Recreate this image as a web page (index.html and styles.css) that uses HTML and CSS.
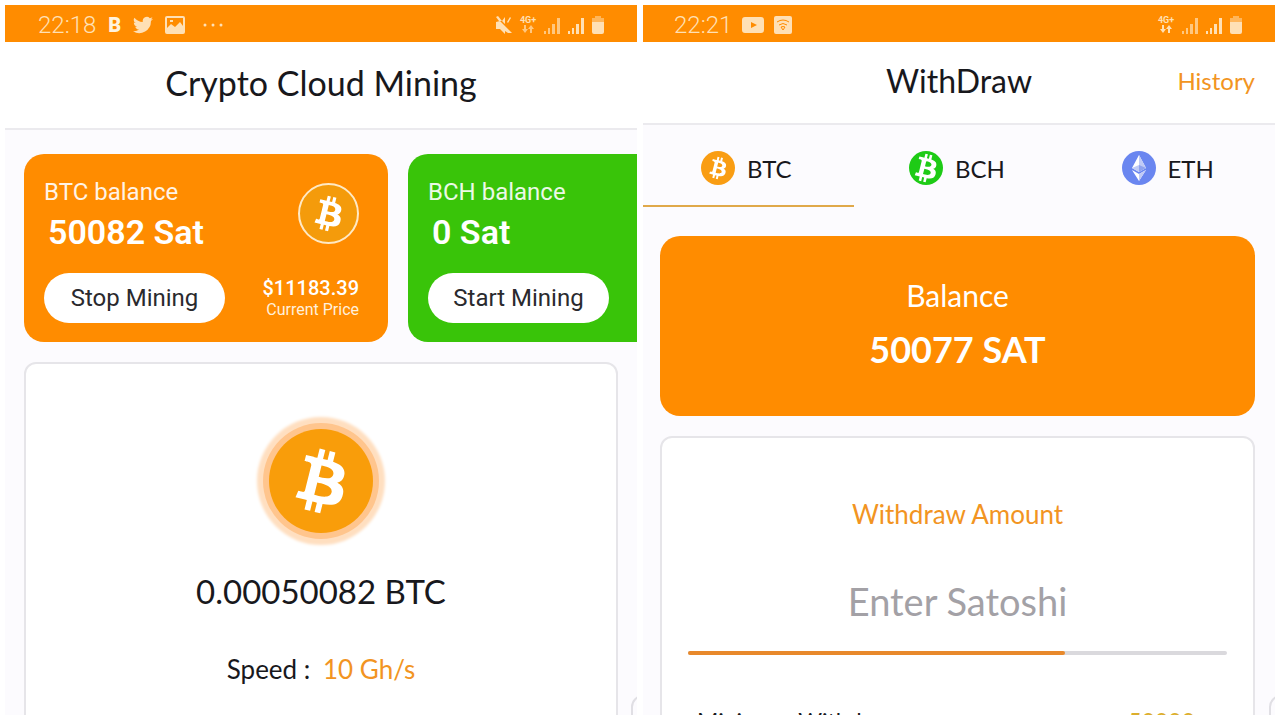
FILE: index.html
```html
<!DOCTYPE html>
<html lang="en">
<head>
    <meta charset="UTF-8">
    <meta name="viewport" content="width=device-width, initial-scale=1.0">
    <title>Crypto Cloud Mining</title>
    <link rel="stylesheet" href="styles.css">
</head>
<body>

    <svg class="sprite" aria-hidden="true">
        <symbol id="bitcoin" viewBox="0 0 32 32">
            <path fill="#fff" d="M23.189 14.02c.314-2.096-1.283-3.223-3.465-3.975l.708-2.84-1.728-.43-.69 2.765c-.454-.114-.92-.22-1.385-.326l.695-2.783L15.596 6l-.708 2.839c-.376-.086-.746-.17-1.104-.26l.002-.009-2.384-.595-.46 1.846s1.283.294 1.256.312c.7.175.826.638.805 1.006l-.806 3.235c.048.012.11.03.18.057l-.183-.045-1.13 4.532c-.086.212-.303.531-.793.41.018.025-1.256-.313-1.256-.313l-.858 1.978 2.25.561c.418.105.828.215 1.231.318l-.715 2.872 1.727.43.708-2.84c.472.127.93.245 1.378.357l-.706 2.828 1.728.43.715-2.866c2.948.558 5.164.333 6.097-2.333.752-2.146-.037-3.385-1.588-4.192 1.13-.26 1.98-1.003 2.207-2.538zm-3.95 5.538c-.533 2.147-4.148.986-5.32.695l.95-3.805c1.172.293 4.929.872 4.37 3.11zm.535-5.569c-.487 1.953-3.495.96-4.47.717l.86-3.45c.975.243 4.118.696 3.61 2.733z"/>
        </symbol>
        <symbol id="signal" viewBox="0 0 18 18">
            <path d="M1 15h2v3H1zM5 12h2v6H5zM9 8h3v10H9z"/>
            <path class="last-bar" d="M14 2h3v16h-3z"/>
        </symbol>
        <symbol id="battery" viewBox="0 0 14 18">
            <path opacity=".5" d="M4 0h6v2h3v5H1V2h3z"/>
            <path d="M1 6h12v10a2 2 0 0 1-2 2H3a2 2 0 0 1-2-2z"/>
        </symbol>
        <symbol id="arrows" viewBox="0 0 14 8">
            <path d="M3 0h2v4h2L4 8 1 4h2zM9 8h2V4h2l-3-4-3 4h2z"/>
        </symbol>
    </svg>

    <!-- Mining screen -->
    <section class="screen">
        <div class="status-bar">
            <div class="status-left">
                <span class="clock">22:18</span>
                <span class="status-coin">B</span>
                <svg class="bird" viewBox="0 0 24 24"><path d="M24 4.6a10 10 0 0 1-2.8.8 5 5 0 0 0 2.1-2.7 10 10 0 0 1-3.1 1.2 4.9 4.9 0 0 0-8.4 4.5A14 14 0 0 1 1.7 3.2a4.9 4.9 0 0 0 1.5 6.5 5 5 0 0 1-2.2-.6 5 5 0 0 0 3.9 4.9 5 5 0 0 1-2.2.1 4.9 4.9 0 0 0 4.6 3.4A10 10 0 0 1 0 19.5 14 14 0 0 0 21.5 7.1 10 10 0 0 0 24 4.6z"/></svg>
                <svg class="photo" viewBox="0 0 20 18"><path fill-rule="evenodd" d="M2 0h16a2 2 0 0 1 2 2v14a2 2 0 0 1-2 2H2a2 2 0 0 1-2-2V2a2 2 0 0 1 2-2zm0 2v10l4-4 4 3 5-5 3 4V2zm3 2h3v2H5z"/></svg>
                <svg class="dots" viewBox="0 0 22 4"><circle cx="2" cy="2" r="1.5"/><circle cx="10" cy="2" r="1.5"/><circle cx="18" cy="2" r="1.5"/></svg>
            </div>
            <div class="status-right">
                <svg class="mute" viewBox="0 0 18 18"><path d="M1 6l4-1L17 17h-4l-3-2v3l-5-5H1zM7 5l3-4v7zM12 6l3-5 1 1-3 5zM1 1l2-1 4 5H4z"/></svg>
                <span class="network"><small>4G+</small><svg class="faint"><use href="#arrows"/></svg></span>
                <svg class="signal weak"><use href="#signal"/></svg>
                <svg class="signal"><use href="#signal"/></svg>
                <svg class="battery"><use href="#battery"/></svg>
            </div>
        </div>

        <header class="header">
            <h1>Crypto Cloud Mining</h1>
        </header>

        <div class="content">
            <div class="coin-cards">
                <article class="coin-card">
                    <div class="coin-info">
                        <p class="coin-label">BTC balance</p>
                        <p class="coin-amount">50082 Sat</p>
                        <button type="button" class="mine-button">Stop Mining</button>
                    </div>
                    <div class="coin-price">
                        <svg class="coin-icon"><use href="#bitcoin"/></svg>
                        <strong>$11183.39</strong>
                        <span>Current Price</span>
                    </div>
                </article>
                <article class="coin-card green">
                    <div class="coin-info">
                        <p class="coin-label">BCH balance</p>
                        <p class="coin-amount">0 Sat</p>
                        <button type="button" class="mine-button">Start Mining</button>
                    </div>
                </article>
            </div>

            <div class="panel mining-panel">
                <svg class="mining-coin"><use href="#bitcoin"/></svg>
                <p class="mined">0.00050082 BTC</p>
                <p class="speed">Speed : <span>10 Gh/s</span></p>
            </div>
        </div>
        <div class="next-panel"></div>
    </section>

    <!-- Withdraw screen -->
    <section class="screen withdraw">
        <div class="status-bar">
            <div class="status-left">
                <span class="clock">22:21</span>
                <svg class="video" viewBox="0 0 22 16"><path fill-rule="evenodd" d="M3 0h16a3 3 0 0 1 3 3v10a3 3 0 0 1-3 3H3a3 3 0 0 1-3-3V3a3 3 0 0 1 3-3zm6 5v6l6-3z"/></svg>
                <svg class="wifi" viewBox="0 0 18 18"><rect width="18" height="18" rx="2"/><path d="M3 6q6-4 12 0M5 9q4-3 8 0M7 11q2-1 4 0L9 14z" fill="none" stroke="#ff8c00"/></svg>
            </div>
            <div class="status-right">
                <span class="network"><small>4G+</small><svg><use href="#arrows"/></svg></span>
                <svg class="signal weak"><use href="#signal"/></svg>
                <svg class="signal"><use href="#signal"/></svg>
                <svg class="battery"><use href="#battery"/></svg>
            </div>
        </div>

        <header class="header">
            <h1>WithDraw</h1>
            <a href="#history" class="history">History</a>
        </header>

        <nav class="tabs">
            <a href="#btc" class="active">
                <svg viewBox="0 0 34 34"><circle cx="17" cy="17" r="17" fill="#f99d13"/><use href="#bitcoin" x="-1" y="-1" width="36" height="36"/></svg>
                BTC
            </a>
            <a href="#bch">
                <svg viewBox="0 0 34 34"><circle cx="17" cy="17" r="17" fill="#1ecb16"/><use href="#bitcoin" x="-6" y="-6" width="46" height="46"/></svg>
                BCH
            </a>
            <a href="#eth">
                <svg viewBox="0 0 34 34"><circle cx="17" cy="17" r="17" fill="#6a86f0"/><path fill="#fff" d="M17 4l7 13-7 4-7-4zM10 19l7 4 7-4-7 11z"/><path fill="#c0cbf6" d="M17 4l7 13-7 4zM17 23l7-4-7 11z"/><path fill="#8fa3ef" d="M17 14l7 3-7 4z"/><path fill="#c0cbf6" d="M17 14l-7 3 7 4z"/></svg>
                ETH
            </a>
        </nav>

        <div class="content">
            <div class="balance-card">
                <p>Balance</p>
                <strong>50077 SAT</strong>
            </div>

            <form class="panel withdraw-panel">
                <label for="amount">Withdraw Amount</label>
                <input type="text" id="amount" placeholder="Enter Satoshi">
                <div class="meter"><div class="meter-fill"></div></div>
                <div class="minimum">
                    <span>Minimum Withdraw</span>
                    <span class="minimum-value">50000</span>
                </div>
            </form>
        </div>
        <div class="next-panel"></div>
    </section>

</body>
</html>
```
FILE: styles.css
```css
* {
    box-sizing: border-box;
}

body {
    font-family: Lato, sans-serif;
    background-color: #fff;
    color: #18181c;
    margin: 0;
    padding: 5px;
    height: 100vh;
    display: flex;
    gap: 6px;
    overflow: hidden;
}

h1, p {
    margin: 0;
    font-weight: normal;
}

.sprite {
    position: absolute;
    width: 0;
    height: 0;
}

.screen {
    position: relative;
    flex: 1;
    min-width: 0;
    overflow: hidden;
    background-color: #fcfbfe;
}

/* Status bar */
.status-bar {
    display: flex;
    justify-content: space-between;
    align-items: center;
    height: 37px;
    padding: 2px 32px 0 33px;
    background-color: #ff8c00;
    color: #ffe0b5;
    fill: #ffe0b5;
    font-family: Roboto, sans-serif;
}

.withdraw .status-bar {
    padding-left: 31px;
}

.status-left, .status-right {
    display: flex;
    align-items: center;
}

.status-left {
    gap: 12px;
}

.withdraw .status-left {
    gap: 10px;
}

.status-right {
    gap: 6px;
}

.clock {
    font-size: 24px;
    font-weight: 300;
}

.status-coin {
    font-size: 20px;
    font-weight: 900;
    color: #fff3df;
}

.bird {
    width: 20px;
    height: 20px;
}

.photo {
    width: 20px;
    height: 18px;
}

.dots {
    width: 22px;
    height: 4px;
    margin-left: 6px;
}

.video {
    width: 22px;
    height: 16px;
}

.wifi, .mute, .signal {
    width: 18px;
    height: 18px;
}

.weak .last-bar, .faint, .weak {
    opacity: 0.7;
}

.battery {
    width: 14px;
    height: 18px;
}

.network {
    display: flex;
    flex-direction: column;
    align-items: center;
    width: 18px;
}

.network small {
    font-size: 9px;
    line-height: 9px;
    font-weight: bold;
}

.network svg {
    width: 14px;
    height: 8px;
}

/* Title row */
.header {
    position: relative;
    display: flex;
    align-items: center;
    justify-content: center;
    height: 88px;
    padding-bottom: 4px;
    background-color: #fff;
    border-bottom: 2px solid #ebeaee;
}

.header h1 {
    font-size: 34px;
    line-height: 40px;
}

.withdraw .header {
    height: 83px;
}

.withdraw .header h1 {
    font-size: 32px;
}

.history {
    position: absolute;
    right: 20px;
    font-size: 24px;
    color: #f29422;
    text-decoration: none;
}

.content {
    padding: 24px 19px 0;
}

/* Coin cards */
.coin-cards {
    display: flex;
    gap: 20px;
}

.coin-card {
    display: flex;
    justify-content: space-between;
    flex: 0 0 364px;
    height: 188px;
    padding: 20px 29px 20px 20px;
    border-radius: 20px;
    background-color: #ff8c00;
    color: #fff;
    font-family: Roboto, sans-serif;
}

.coin-card.green {
    background-color: #39c409;
}

.coin-label {
    font-size: 24px;
    line-height: 36px;
    opacity: 0.9;
}

.coin-amount {
    padding-left: 4px;
    font-size: 34px;
    line-height: 44px;
    font-weight: 600;
}

.mine-button {
    width: 181px;
    height: 50px;
    margin-top: 19px;
    border: none;
    border-radius: 25px;
    background-color: #fff;
    color: #2a2a2e;
    font-family: Roboto, sans-serif;
    font-size: 24px;
    cursor: pointer;
}

.coin-price {
    display: flex;
    flex-direction: column;
    align-items: flex-end;
    padding-top: 9px;
}

.coin-icon {
    width: 61px;
    height: 61px;
    margin-bottom: 32px;
    border: 2px solid #ffe9c4;
    border-radius: 50%;
    background-color: #f49b0b;
}

.coin-price strong {
    font-size: 20px;
    line-height: 24px;
    font-weight: 500;
}

.coin-price span {
    font-size: 16px;
    line-height: 20px;
    color: #fff0dc;
}

/* Panels */
.panel {
    display: flex;
    flex-direction: column;
    align-items: center;
    margin-top: 20px;
    height: 480px;
    border: 2px solid #e6e5e9;
    border-radius: 12px;
    background-color: #fff;
}

.mining-panel {
    padding-top: 65px;
}

.mining-coin {
    width: 104px;
    height: 104px;
    border-radius: 50%;
    background-color: #f99d0a;
    box-shadow: 0 0 0 6px #ffc58d, 0 0 3px 12px #ffdfc0;
}

.mined {
    margin-top: 36px;
    font-size: 33px;
    line-height: 44px;
}

.speed {
    margin-top: 40px;
    font-size: 26px;
    line-height: 32px;
}

.speed span {
    margin-left: 6px;
    color: #f29422;
}

.next-panel {
    position: absolute;
    right: -34px;
    bottom: -20px;
    width: 40px;
    height: 40px;
    border: 2px solid #e0dfe4;
    border-radius: 12px;
}

/* Tabs */
.tabs {
    display: flex;
}

.tabs a {
    flex: 1;
    display: flex;
    align-items: center;
    justify-content: center;
    gap: 12px;
    height: 82px;
    padding: 6px 4px 0 0;
    border-bottom: 2px solid transparent;
    color: #18181c;
    font-size: 24px;
    text-decoration: none;
}

.tabs .active {
    border-bottom-color: #e0a94a;
}

.tabs svg {
    width: 34px;
    height: 34px;
}

/* Withdraw */
.withdraw .content {
    padding: 29px 20px 0 17px;
}

.balance-card {
    height: 180px;
    padding-top: 41px;
    border-radius: 20px;
    background-color: #ff8c00;
    color: #fff;
    text-align: center;
}

.balance-card p {
    font-size: 30px;
    line-height: 36px;
}

.balance-card strong {
    display: block;
    margin-top: 14px;
    font-size: 36px;
    line-height: 44px;
}

.withdraw-panel {
    padding: 58px 26px 0;
}

.withdraw-panel label {
    font-size: 26px;
    line-height: 36px;
    color: #f29422;
}

.withdraw-panel input {
    width: 100%;
    height: 60px;
    margin-top: 39px;
    padding: 0;
    border: none;
    outline: none;
    background: none;
    font-family: Lato, sans-serif;
    font-size: 38px;
    text-align: center;
}

.withdraw-panel input::placeholder {
    color: #a3a1a6;
}

.meter {
    width: 100%;
    height: 4px;
    margin-top: 20px;
    border-radius: 2px;
    background-color: #dad9dd;
}

.meter-fill {
    width: 70%;
    height: 4px;
    border-radius: 2px;
    background-color: #e8892b;
}

.minimum {
    display: flex;
    justify-content: space-between;
    width: 100%;
    margin-top: 50px;
    padding: 0 32px 0 9px;
    font-size: 23px;
    line-height: 32px;
}

.minimum-value {
    color: #dcae2c;
}
```
